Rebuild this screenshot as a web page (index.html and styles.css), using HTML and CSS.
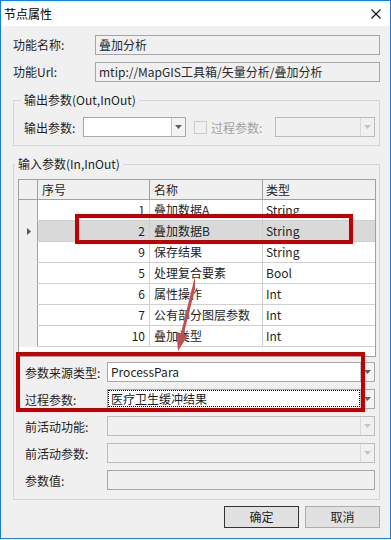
FILE: index.html
```html
<!DOCTYPE html>
<html lang="zh-CN">
<head>
    <meta charset="UTF-8">
    <meta name="viewport" content="width=device-width, initial-scale=1.0">
    <title>节点属性</title>
    <link rel="stylesheet" href="styles.css">
</head>
<body>
    <div class="window">
        <div class="titlebar">
            <span class="title">节点属性</span>
            <svg class="close" width="10" height="10" viewBox="0 0 10 10">
                <path d="M0.5 0.5 L9.5 9.5 M9.5 0.5 L0.5 9.5" stroke="#111" stroke-width="1.1" fill="none"/>
            </svg>
        </div>

        <div class="content">
            <div class="info-row">
                <span class="info-label">功能名称:</span>
                <div class="textbox">叠加分析</div>
            </div>
            <div class="info-row">
                <span class="info-label">功能Url:</span>
                <div class="textbox">mtip://MapGIS工具箱/矢量分析/叠加分析</div>
            </div>

            <fieldset class="group group-out">
                <legend>输出参数(Out,InOut)</legend>
                <div class="out-row">
                    <span class="out-label">输出参数:</span>
                    <div class="combo combo-out">
                        <div class="combo-text"></div>
                        <div class="combo-btn">
                            <svg width="7" height="4" viewBox="0 0 7 4"><polygon points="0,0 7,0 3.5,4" fill="#606060"/></svg>
                        </div>
                    </div>
                    <span class="check"></span>
                    <span class="dis-label">过程参数:</span>
                    <div class="combo combo-small disabled">
                        <div class="combo-text"></div>
                        <div class="combo-btn">
                            <svg width="7" height="4" viewBox="0 0 7 4"><polygon points="0,0 7,0 3.5,4" fill="#c4c4c4"/></svg>
                        </div>
                    </div>
                </div>
            </fieldset>

            <fieldset class="group group-in">
                <legend>输入参数(In,InOut)</legend>
                <div class="grid">
                    <table class="param-table">
                        <thead>
                            <tr>
                                <th class="rh"></th>
                                <th class="col-no">序号</th>
                                <th class="col-name">名称</th>
                                <th class="col-type">类型</th>
                            </tr>
                        </thead>
                        <tbody>
                            <tr><td class="rh"></td><td class="num">1</td><td>叠加数据A</td><td class="last">String</td></tr>
                            <tr class="selected">
                                <td class="rh"><svg width="4" height="7" viewBox="0 0 4 7"><polygon points="0,0 4,3.5 0,7" fill="#555"/></svg></td>
                                <td class="num">2</td><td>叠加数据B</td><td class="last">String</td>
                            </tr>
                            <tr><td class="rh"></td><td class="num">9</td><td>保存结果</td><td class="last">String</td></tr>
                            <tr><td class="rh"></td><td class="num">5</td><td>处理复合要素</td><td class="last">Bool</td></tr>
                            <tr><td class="rh"></td><td class="num">6</td><td>属性操作</td><td class="last">Int</td></tr>
                            <tr><td class="rh"></td><td class="num">7</td><td>公有部分图层参数</td><td class="last">Int</td></tr>
                            <tr><td class="rh"></td><td class="num">10</td><td>叠加类型</td><td class="last">Int</td></tr>
                        </tbody>
                    </table>
                </div>

                <div class="param-rows">
                    <div class="param-row">
                        <span class="param-label">参数来源类型:</span>
                        <div class="combo combo-wide">
                            <div class="combo-text">ProcessPara</div>
                            <div class="combo-btn">
                                <svg width="7" height="4" viewBox="0 0 7 4"><polygon points="0,0 7,0 3.5,4" fill="#606060"/></svg>
                            </div>
                        </div>
                    </div>
                    <div class="param-row">
                        <span class="param-label">过程参数:</span>
                        <div class="combo combo-wide">
                            <div class="combo-text"><span class="focus">医疗卫生缓冲结果</span></div>
                            <div class="combo-btn">
                                <svg width="7" height="4" viewBox="0 0 7 4"><polygon points="0,0 7,0 3.5,4" fill="#606060"/></svg>
                            </div>
                        </div>
                    </div>
                    <div class="param-row">
                        <span class="param-label">前活动功能:</span>
                        <div class="combo combo-wide disabled">
                            <div class="combo-text"></div>
                            <div class="combo-btn">
                                <svg width="7" height="4" viewBox="0 0 7 4"><polygon points="0,0 7,0 3.5,4" fill="#c4c4c4"/></svg>
                            </div>
                        </div>
                    </div>
                    <div class="param-row">
                        <span class="param-label">前活动参数:</span>
                        <div class="combo combo-wide disabled">
                            <div class="combo-text"></div>
                            <div class="combo-btn">
                                <svg width="7" height="4" viewBox="0 0 7 4"><polygon points="0,0 7,0 3.5,4" fill="#c4c4c4"/></svg>
                            </div>
                        </div>
                    </div>
                    <div class="param-row">
                        <span class="param-label">参数值:</span>
                        <div class="textbox value-box"></div>
                    </div>
                </div>
            </fieldset>

            <div class="buttons">
                <div class="btn btn-default">确定</div>
                <div class="btn">取消</div>
            </div>
        </div>

        <!-- annotation marks drawn over the dialog -->
        <div class="mark mark-row"></div>
        <div class="mark mark-fields"></div>
        <svg class="arrow" width="30" height="110" viewBox="0 0 30 110">
            <line x1="37" y1="9" x2="17.3" y2="89" stroke="#c0504d" stroke-width="3"/>
            <polygon points="13,106 23.1,89.9 11.5,87.1" fill="#c0504d"/>
        </svg>
    </div>
</body>
</html>
```

FILE: styles.css
```css
* {
    box-sizing: border-box;
}

body {
    margin: 0;
    background: #fff;
    font-family: "Noto Sans CJK SC", "Noto Sans", sans-serif;
    font-size: 12px;
    color: #1e1e1e;
}

.window {
    position: relative;
    width: 391px;
    height: 539px;
    border: 1px solid #1a7fd4;
    background: #f0f0f0;
}

.titlebar {
    height: 25px;
    background: #fff;
    display: flex;
    align-items: center;
    justify-content: space-between;
    padding: 0 9px 0 3px;
}

.title {
    line-height: 16px;
    color: #000;
}

.content {
    padding: 9px 10px 0 12px;
}

.info-row {
    display: flex;
    align-items: center;
    height: 20px;
}

.info-row + .info-row {
    margin-top: 7px;
}

.info-label {
    width: 82px;
    line-height: 16px;
}

.textbox {
    height: 20px;
    border: 1px solid #a5a5a5;
    background: #f0f0f0;
    padding: 0 3px;
    line-height: 18px;
    white-space: nowrap;
    color: #2a2a2a;
}

.info-row .textbox {
    width: 285px;
}

/* group boxes */
.group {
    margin: 10px 0 0;
    width: 367px;
    min-width: 0;
    border: 1px solid #d5d5d5;
}

.group legend {
    padding: 0 3px;
    margin-left: -3px;
    line-height: 16px;
}

.group-out {
    padding: 9px 3px 8px 10px;
}

.group-in {
    padding: 7px 3px 9px 4px;
}

.out-row {
    display: flex;
    align-items: center;
    height: 20px;
}

.out-label {
    width: 59px;
}

.check {
    width: 13px;
    height: 13px;
    margin-left: 8px;
    border: 1px solid #cccccc;
    background: #f0f0f0;
}

.dis-label {
    width: 64px;
    margin-left: 4px;
    color: #a0a0a0;
}

/* combo boxes */
.combo {
    display: flex;
    height: 20px;
    border: 1px solid #a8a8a8;
    background: #fff;
}

.combo-text {
    flex: 1;
    padding: 0 3px;
    line-height: 18px;
    white-space: nowrap;
    overflow: hidden;
}

.combo-btn {
    width: 14px;
    border-left: 1px solid #c4c4c4;
    background: #f3f3f3;
    display: flex;
    align-items: center;
    justify-content: center;
}

.combo.disabled {
    border-color: #bcbcbc;
    background: #f0f0f0;
}

.combo.disabled .combo-btn {
    border-left-color: #dadada;
    background: #f0f0f0;
}

.combo-out {
    width: 103px;
}

.combo-small {
    width: 100px;
}

.combo-wide {
    width: 268px;
}

.focus {
    display: block;
    margin: 0 -3px;
    padding: 0 2px;
    height: 17px;
    line-height: 15px;
    border: 1px dotted #000;
}

/* data grid */
.grid {
    width: 358px;
    height: 178px;
    border: 1px solid #a0a0a0;
    background: #fff;
    overflow: hidden;
}

.param-table {
    width: 356px;
    border-collapse: separate;
    border-spacing: 0;
    table-layout: fixed;
}

.param-table th {
    background: #f0f0f0;
    font-weight: normal;
    text-align: left;
    line-height: 19px;
    padding: 0 0 0 4px;
    border-right: 1px solid #a0a0a0;
    border-bottom: 1px solid #a0a0a0;
}

.param-table th.rh {
    width: 19px;
}

.param-table th.col-no {
    width: 112px;
}

.param-table th.col-name {
    width: 113px;
}

.param-table th.col-type {
    border-right: none;
    padding-left: 3px;
}

.param-table td {
    line-height: 20px;
    padding: 0 0 0 4px;
    border-right: 1px solid #d0d0d0;
    border-bottom: 1px solid #d0d0d0;
    white-space: nowrap;
    overflow: hidden;
}

.param-table td.rh {
    background: #f0f0f0;
    padding: 0 0 0 8px;
    border-right-color: #a0a0a0;
    border-bottom-color: #f0f0f0;
}

.param-table td.rh svg {
    display: block;
}

.param-table td.num {
    text-align: right;
    padding: 0 4px 0 0;
}

.param-table td.last {
    border-right: none;
    padding-left: 3px;
}

.param-table tr.selected td {
    background: #d9d9d9;
}

.param-table tr.selected td.rh {
    background: #f0f0f0;
}

.param-rows {
    margin-top: 5px;
    padding-left: 7px;
    display: flex;
    flex-direction: column;
    gap: 7px;
}

.param-row {
    display: flex;
    align-items: center;
    height: 20px;
}

.param-label {
    width: 82px;
}

.value-box {
    width: 268px;
}

/* buttons */
.buttons {
    display: flex;
    justify-content: flex-end;
    gap: 6px;
    margin-top: 6px;
}

.btn {
    width: 75px;
    height: 22px;
    border: 1px solid #adadad;
    background: #e1e1e1;
    text-align: center;
    line-height: 20px;
}

.btn-default {
    border-color: #333;
}

/* annotations */
.mark {
    position: absolute;
    border: 4px solid #c00000;
}

.mark-row {
    left: 74px;
    top: 213px;
    width: 278px;
    height: 30px;
}

.mark-fields {
    left: 15px;
    top: 351px;
    width: 349px;
    height: 60px;
}

.arrow {
    position: absolute;
    left: 164px;
    top: 244px;
}
```
